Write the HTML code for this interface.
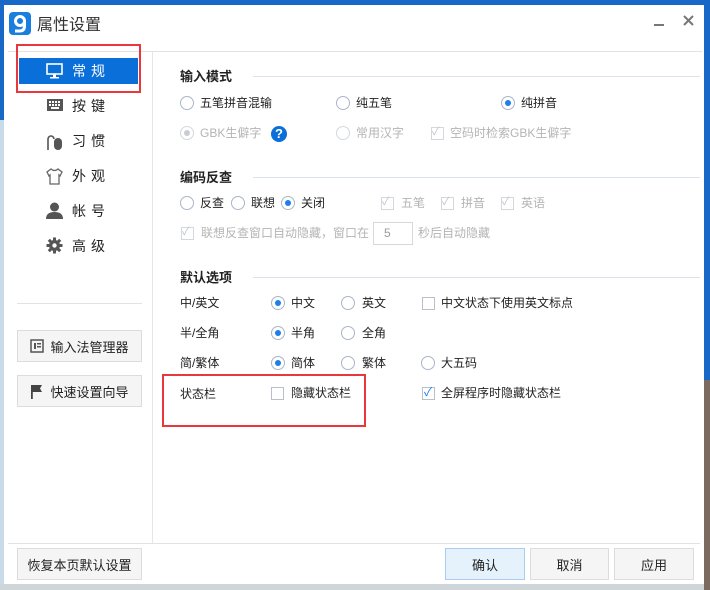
<!DOCTYPE html>
<html><head><meta charset="utf-8"><style>
*{margin:0;padding:0;box-sizing:border-box}
body{width:710px;height:590px;position:relative;overflow:hidden;background:#1868c8;font-family:"Liberation Sans","Noto Sans CJK SC",sans-serif;font-size:12px;color:#222}
.a{position:absolute;white-space:nowrap;line-height:16px}
.win{position:absolute;left:4px;top:5px;width:700px;height:579px;background:#fff}
.rd{position:absolute;width:14px;height:14px;border:1px solid #a9b6c8;border-radius:50%;background:#fff}
.rd.on::after{content:"";position:absolute;left:3px;top:3px;width:6px;height:6px;border-radius:50%;background:#1e7fe6}
.rd.dis{border-color:#d4d8de}
.rd.dis.on::after{background:#c8cdd4}
.cb{position:absolute;width:13px;height:13px;border:1px solid #b8c0cc;background:#fff}
.cb.dis{border-color:#d4d8de}
.dis-t{color:#b4b4b4}
.h{font-weight:bold;font-size:13px}
.ln{position:absolute;height:1px;background:#dde3ea}
.btn{position:absolute;border:1px solid #dcdcdc;background:#f5f5f5;display:flex;align-items:center;justify-content:center;font-size:13px}
.nav{position:absolute;left:72px;font-size:14px;letter-spacing:5px;line-height:18px}
</style></head><body>
<div class="a" style="left:0;top:120px;width:4px;height:470px;background:#c9dbe9"></div>
<div class="a" style="left:0;top:584px;width:710px;height:6px;background:#cfd6da"></div>
<div class="a" style="left:704px;top:380px;width:6px;height:210px;background:#7a6a60"></div>
<div class="win"></div>
<!-- title -->
<svg class="a" style="left:9px;top:12px" width="22" height="23" viewBox="0 0 22 23"><rect width="22" height="23" rx="4" fill="#1a7ee0"/><circle cx="11" cy="9" r="4.5" fill="none" stroke="#fff" stroke-width="3"/><path d="M15.5 8 V14 Q15.5 19 10.5 19 H6" fill="none" stroke="#fff" stroke-width="3"/></svg>
<div class="a" style="left:37px;top:16px;font-size:16px;line-height:20px;color:#333">属性设置</div>
<div class="a" style="left:654px;top:24px;width:10px;height:2px;background:#777"></div>
<svg class="a" style="left:683px;top:15px" width="11" height="11"><path d="M1 1 L10 10 M10 1 L1 10" stroke="#777" stroke-width="2"/></svg>
<div class="ln" style="left:8px;top:51px;width:694px;background:#e2e2e2"></div>
<!-- sidebar -->
<div class="a" style="left:152px;top:52px;width:1px;height:491px;background:#e6e6e6"></div>
<div class="a" style="left:19px;top:58px;width:119px;height:26px;background:#0a6fd8"></div>
<div class="a" style="left:16px;top:44px;width:125px;height:49px;border:2px solid #e8383d"></div>
<svg class="a" style="left:46px;top:63px" width="17" height="16" viewBox="0 0 17 16"><rect x="1" y="1" width="15" height="10" fill="none" stroke="#fff" stroke-width="1.6"/><rect x="7" y="11" width="3" height="3" fill="#fff"/><rect x="4" y="14" width="9" height="1.5" fill="#fff"/></svg>
<div class="nav" style="top:62px;color:#fff">常规</div>
<svg class="a" style="left:47px;top:99px" width="16" height="12"><rect x="0" y="0" width="16" height="12" fill="#555"/><g fill="#fff"><rect x="2" y="2" width="2" height="2"/><rect x="5" y="2" width="2" height="2"/><rect x="8" y="2" width="2" height="2"/><rect x="11" y="2" width="2" height="2"/><rect x="2" y="5" width="2" height="2"/><rect x="5" y="5" width="2" height="2"/><rect x="8" y="5" width="2" height="2"/><rect x="11" y="5" width="2" height="2"/><rect x="4" y="8" width="8" height="2"/></g></svg>
<div class="nav" style="top:97px">按键</div>
<svg class="a" style="left:46px;top:132px" width="17" height="19"><path d="M2 18 V7 a3 3 0 0 1 6 0" fill="none" stroke="#555" stroke-width="1.6"/><rect x="8" y="6" width="8" height="12" rx="4" fill="#555"/></svg>
<div class="nav" style="top:132px">习惯</div>
<svg class="a" style="left:46px;top:168px" width="17" height="17"><path d="M5 1 L1 4 L3 8 L4 7 V16 H13 V7 L14 8 L16 4 L12 1 Q8.5 4 5 1Z" fill="none" stroke="#666" stroke-width="1.3"/></svg>
<div class="nav" style="top:167px">外观</div>
<svg class="a" style="left:46px;top:202px" width="17" height="17"><circle cx="8.5" cy="5" r="4.5" fill="#555"/><path d="M0 17 Q0 10 8.5 10 Q17 10 17 17Z" fill="#555"/></svg>
<div class="nav" style="top:202px">帐号</div>
<svg class="a" style="left:46px;top:237px" width="17" height="17" viewBox="0 0 17 17"><circle cx="8.5" cy="8.5" r="5.5" fill="#555"/><g stroke="#555" stroke-width="3"><line x1="8.5" y1="0.5" x2="8.5" y2="16.5"/><line x1="0.5" y1="8.5" x2="16.5" y2="8.5"/><line x1="2.8" y1="2.8" x2="14.2" y2="14.2"/><line x1="14.2" y1="2.8" x2="2.8" y2="14.2"/></g><circle cx="8.5" cy="8.5" r="2.2" fill="#fff"/></svg>
<div class="nav" style="top:237px">高级</div>
<div class="ln" style="left:17px;top:303px;width:125px;background:#e2e2e2"></div>
<div class="btn" style="left:17px;top:330px;width:125px;height:32px"><svg width="14" height="14" style="margin-right:6px"><rect x="1" y="1" width="12" height="12" fill="none" stroke="#555" stroke-width="1.5"/><rect x="4" y="4" width="2" height="6" fill="#555"/><rect x="7" y="4" width="4" height="1.5" fill="#555"/><rect x="7" y="7" width="4" height="1.5" fill="#555"/></svg>输入法管理器</div>
<div class="btn" style="left:17px;top:375px;width:125px;height:32px"><svg width="14" height="15" style="margin-right:6px"><rect x="1" y="1" width="1.8" height="14" fill="#444"/><path d="M2.5 1 H12 L10 4.5 L12 8 H2.5Z" fill="#444"/></svg>快速设置向导</div>
<!-- content -->
<div class="a h" style="left:180px;top:69px">输入模式</div>
<div class="ln" style="left:253px;top:76px;width:447px"></div>
<div class="rd" style="left:180px;top:96px"></div><div class="a" style="left:200px;top:95px">五笔拼音混输</div>
<div class="rd" style="left:336px;top:96px"></div><div class="a" style="left:356px;top:95px">纯五笔</div>
<div class="rd on" style="left:501px;top:96px"></div><div class="a" style="left:521px;top:95px">纯拼音</div>
<div class="rd dis on" style="left:180px;top:126px"></div><div class="a dis-t" style="left:200px;top:125px">GBK生僻字</div>
<div class="a" style="left:271px;top:126px;width:16px;height:16px;border-radius:50%;background:#0a6fd8;color:#fff;font-weight:bold;font-size:13px;text-align:center;line-height:16px">?</div>
<div class="rd dis" style="left:336px;top:126px"></div><div class="a dis-t" style="left:356px;top:125px">常用汉字</div>
<div class="cb dis" style="left:431px;top:127px"></div><div class="a" style="left:432px;top:124px;color:#c0c4ca;font-size:11px">✓</div><div class="a dis-t" style="left:450px;top:125px">空码时检索GBK生僻字</div>

<div class="a h" style="left:180px;top:170px">编码反查</div>
<div class="ln" style="left:253px;top:177px;width:447px"></div>
<div class="rd" style="left:180px;top:196px"></div><div class="a" style="left:200px;top:195px">反查</div>
<div class="rd" style="left:231px;top:196px"></div><div class="a" style="left:251px;top:195px">联想</div>
<div class="rd on" style="left:281px;top:196px"></div><div class="a" style="left:301px;top:195px">关闭</div>
<div class="cb dis" style="left:381px;top:197px"></div><div class="a" style="left:382px;top:194px;color:#c0c4ca;font-size:11px">✓</div><div class="a dis-t" style="left:401px;top:195px">五笔</div>
<div class="cb dis" style="left:441px;top:197px"></div><div class="a" style="left:442px;top:194px;color:#c0c4ca;font-size:11px">✓</div><div class="a dis-t" style="left:461px;top:195px">拼音</div>
<div class="cb dis" style="left:501px;top:197px"></div><div class="a" style="left:502px;top:194px;color:#c0c4ca;font-size:11px">✓</div><div class="a dis-t" style="left:521px;top:195px">英语</div>
<div class="cb dis" style="left:181px;top:227px"></div><div class="a" style="left:182px;top:224px;color:#c0c4ca;font-size:11px">✓</div><div class="a dis-t" style="left:201px;top:225px">联想反查窗口自动隐藏，窗口在</div>
<div class="a dis-t" style="left:373px;top:222px;width:40px;height:23px;border:1px solid #d8d8d8;padding-left:10px;line-height:21px;color:#999">5</div>
<div class="a dis-t" style="left:418px;top:225px">秒后自动隐藏</div>

<div class="a h" style="left:180px;top:270px">默认选项</div>
<div class="ln" style="left:253px;top:277px;width:447px"></div>
<div class="a" style="left:180px;top:295px">中/英文</div>
<div class="rd on" style="left:271px;top:296px"></div><div class="a" style="left:291px;top:295px">中文</div>
<div class="rd" style="left:341px;top:296px"></div><div class="a" style="left:362px;top:295px">英文</div>
<div class="cb" style="left:422px;top:297px"></div><div class="a" style="left:441px;top:295px">中文状态下使用英文标点</div>
<div class="a" style="left:180px;top:325px">半/全角</div>
<div class="rd on" style="left:271px;top:326px"></div><div class="a" style="left:291px;top:325px">半角</div>
<div class="rd" style="left:341px;top:326px"></div><div class="a" style="left:362px;top:325px">全角</div>
<div class="a" style="left:180px;top:355px">简/繁体</div>
<div class="rd on" style="left:271px;top:356px"></div><div class="a" style="left:291px;top:355px">简体</div>
<div class="rd" style="left:341px;top:356px"></div><div class="a" style="left:362px;top:355px">繁体</div>
<div class="rd" style="left:421px;top:356px"></div><div class="a" style="left:441px;top:355px">大五码</div>
<div class="a" style="left:180px;top:386px">状态栏</div>
<div class="cb" style="left:271px;top:387px"></div><div class="a" style="left:291px;top:385px">隐藏状态栏</div>
<div class="cb" style="left:422px;top:387px"></div><div class="a" style="left:424px;top:384px;color:#1e7fe6;font-size:12px">✓</div><div class="a" style="left:441px;top:385px">全屏程序时隐藏状态栏</div>
<div class="a" style="left:162px;top:374px;width:204px;height:53px;border:2px solid #e8383d"></div>

<!-- bottom -->
<div class="ln" style="left:8px;top:543px;width:692px;background:#e2e2e2"></div>
<div class="btn" style="left:17px;top:548px;width:125px;height:32px">恢复本页默认设置</div>
<div class="btn" style="left:445px;top:548px;width:80px;height:32px;background:#e5f1fb;border-color:#a8cdf0">确认</div>
<div class="btn" style="left:530px;top:548px;width:79px;height:32px">取消</div>
<div class="btn" style="left:614px;top:548px;width:80px;height:32px">应用</div>
</body></html>
